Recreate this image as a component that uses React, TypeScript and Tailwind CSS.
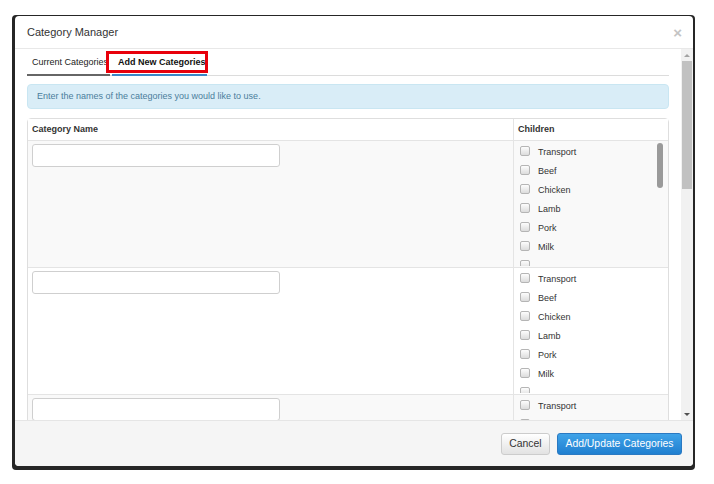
import React from "react";

const items = ["Transport", "Beef", "Chicken", "Lamb", "Pork", "Milk"];

function Checkbox() {
  return (
    <span className="block w-[10px] h-[10px] rounded-[2px] border border-[#b5b5b5] bg-gradient-to-b from-[#fdfdfd] to-[#dcdcdc] shrink-0" />
  );
}

function Row({ striped, thumb, count = 6 }: { striped: boolean; thumb?: boolean; count?: number }) {
  return (
    <div className={`flex h-[127px] border-t border-[#e4e4e4] ${striped ? "bg-[#f9f9f9]" : "bg-white"}`}>
      <div className="w-[485px] pl-[4px] pt-[3px]">
        <div className="w-[248px] h-[23px] bg-white border border-[#cfcfcf] rounded-[3px]" />
      </div>
      <div className="relative flex-1 border-l border-[#e4e4e4] overflow-hidden">
        <div className="flex flex-col pt-[2px] h-[125px] overflow-hidden">
          {items.slice(0, count).map((it) => (
            <div key={it} className="flex items-center h-[19px] pl-[6px] shrink-0">
              <div className="-mt-[3px]">
                <Checkbox />
              </div>
              <span className="ml-[8px] text-[9px] text-[#333]">{it}</span>
            </div>
          ))}
          <div className="flex items-center h-[19px] pl-[6px] shrink-0">
            <div className="-mt-[3px]">
              <Checkbox />
            </div>
          </div>
        </div>
        {thumb && <div className="absolute right-[5px] top-[2px] w-[6px] h-[45px] rounded-[3px] bg-[#9a9a9a]" />}
      </div>
    </div>
  );
}

export default function App() {
  return (
    <div className="w-[714px] h-[484px] bg-white pt-[15px] pl-[12px]" style={{ fontFamily: '"Liberation Sans", Arial, sans-serif' }}>
      <div className="w-[683px] h-[455px] bg-[#262626] rounded-[4px] pt-[1px] pl-[3px] pr-[2px] pb-[4px]">
        <div className="w-[678px] h-[450px] bg-white rounded-[4px] flex flex-col overflow-hidden">
          {/* header */}
          <div className="h-[33px] shrink-0 flex items-center justify-between pl-[12px] pr-[11px] border-b border-[#e8e8e8]">
            <span className="text-[11px] text-[#333] leading-none">Category Manager</span>
            <span className="text-[15px] font-bold text-[#c4c4c4] leading-none">×</span>
          </div>
          {/* body */}
          <div className="flex flex-1 min-h-0">
            <div className="flex-1 min-w-0 overflow-hidden pl-[12px] pr-[12px] pt-[2px]">
              {/* tabs */}
              <div className="flex h-[25px] border-b border-[#dcdcdc] gap-[2px]">
                <div className="w-[83px] h-[25px] flex items-center pl-[5px] border-b-2 border-[#666] text-[9px] text-[#222] whitespace-nowrap">
                  Current Categories
                </div>
                <div className="relative w-[95px] h-[25px] flex items-center pl-[6px] border-b-2 border-[#3b86c6] text-[9px] font-bold text-[#111] whitespace-nowrap">
                  Add New Categories
                  <div className="absolute left-[-6px] right-[-1px] top-0 bottom-[1px] border-[3px] border-[#e8000b]" />
                </div>
              </div>
              {/* alert */}
              <div className="mt-[8px] h-[25px] flex items-center pl-[9px] bg-[#d9edf7] border border-[#c9e6f2] rounded-[4px] text-[9px] text-[#4b7d9c]">
                Enter the names of the categories you would like to use.
              </div>
              {/* table */}
              <div className="mt-[9px] border border-[#dedede] rounded-[4px]">
                <div className="flex h-[21px] items-center bg-white">
                  <div className="w-[485px] pl-[4px] text-[9px] font-bold text-[#333]">Category Name</div>
                  <div className="flex-1 h-full flex items-center pl-[4px] border-l border-[#e4e4e4] text-[9px] font-bold text-[#333]">
                    Children
                  </div>
                </div>
                <Row striped thumb />
                <Row striped={false} />
                <Row striped count={1} />
              </div>
            </div>
            {/* outer scrollbar */}
            <div className="w-[12px] shrink-0 bg-[#f1f1f1] flex flex-col items-center">
              <div className="h-[12px] w-full flex items-center justify-center">
                <div className="w-0 h-0 border-l-[3px] border-r-[3px] border-b-[3px] border-l-transparent border-r-transparent border-b-[#a3a3a3]" />
              </div>
              <div className="w-[10px] h-[128px] bg-[#c1c1c1]" />
              <div className="flex-1" />
              <div className="h-[12px] w-full flex items-center justify-center">
                <div className="w-0 h-0 border-l-[3px] border-r-[3px] border-t-[3px] border-l-transparent border-r-transparent border-t-[#505050]" />
              </div>
            </div>
          </div>
          {/* footer */}
          <div className="h-[46px] shrink-0 bg-[#f5f5f5] border-t border-[#e5e5e5] flex items-center justify-end pr-[11px] gap-[7px]">
            <div className="w-[49px] h-[22px] flex items-center justify-center rounded-[3px] border border-[#cccccc] bg-gradient-to-b from-[#ffffff] to-[#e2e2e2] text-[10.4px] text-[#333] whitespace-nowrap">
              Cancel
            </div>
            <div className="w-[125px] h-[22px] flex items-center justify-center rounded-[3px] border border-[#2a79c2] bg-gradient-to-b from-[#3fa3e8] to-[#1f7fd0] text-[10.4px] text-white whitespace-nowrap">
              Add/Update Categories
            </div>
          </div>
        </div>
      </div>
    </div>
  );
}
